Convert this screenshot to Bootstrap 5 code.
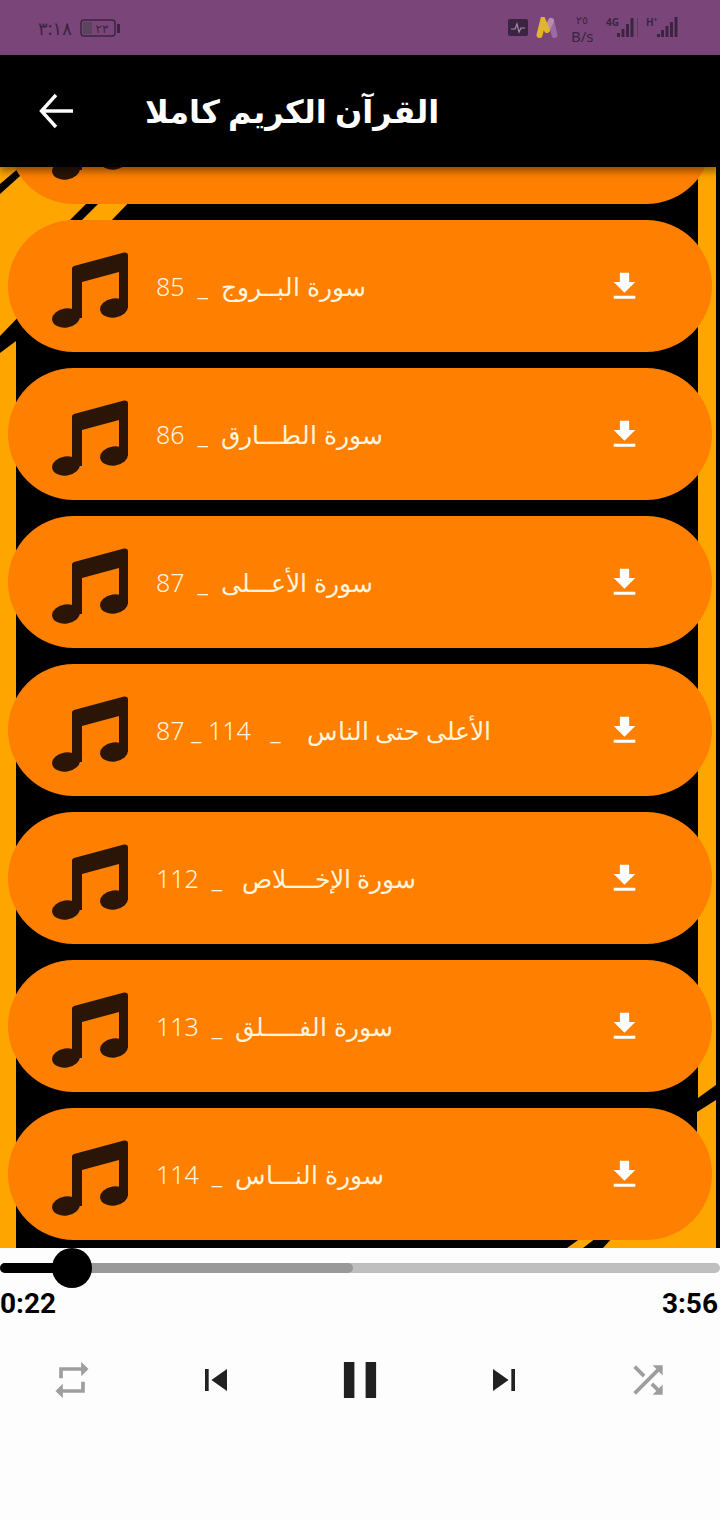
<!DOCTYPE html>
<html lang="ar">
<head>
    <meta charset="UTF-8">
    <meta name="viewport" content="width=device-width, initial-scale=1.0">
    <title>القرآن الكريم كاملا</title>
    <link href="https://cdn.jsdelivr.net/npm/bootstrap@5.3.0/dist/css/bootstrap.min.css" rel="stylesheet">
    <style>
        body {
            background-color: #fff;
            font-family: "Noto Sans", "DejaVu Sans", sans-serif;
            overflow: hidden;
        }
        .status-strip {
            height: 55px;
            flex: none;
            background-color: #7a4679;
            color: #3b2442;
            padding: 0 42px 0 38px;
        }
        .status-clock { font-size: 18px; line-height: 1; }
        .status-speed { font-size: 15px; line-height: 16px; text-align: center; width: 22px; margin: 0 13px; white-space: nowrap; }
        .status-speed small { font-size: 11px; display: block; }
        .top-bar {
            height: 112px;
            flex: none;
            background-color: #000;
            padding: 0 0 0 38px;
            box-shadow: 0 4px 8px rgba(0, 0, 0, .45);
            z-index: 2;
        }
        .top-title {
            margin: 0 0 0 71px;
            color: #fff;
            font-size: 32px;
            font-weight: 700;
        }
        .sura-area {
            flex: 1 1 0;
            min-height: 0;
            background-color: #000;
            padding: 0 8px 8px;
        }
        .sura-bg { position: absolute; top: 0; left: 0; width: 720px; height: 1081px; filter: blur(.7px); }
        .sura-row {
            flex: none;
            height: 132px;
            background-color: #ff8000;
            border-radius: 66px;
            color: #fff5df;
            padding: 0 69px 0 44px;
            position: relative;
        }
        .sura-note { width: 76px; height: 76px; flex: none; margin-top: 8px; }
        .sura-name {
            margin-left: 28px;
            font-size: 25px;
            font-weight: 300;
            white-space: pre;
            line-height: 1;
        }
        .player-box { height: 272px; flex: none; background-color: #fdfdfd; }
        .seek-wrap { height: 40px; }
        .seek-track { top: 15px; left: 0; right: 0; height: 10px; background-color: #bfbfbf; border-radius: 5px; }
        .seek-buffer { top: 15px; left: 0; height: 10px; background-color: #999; border-radius: 5px; }
        .seek-done { top: 15px; left: 0; height: 10px; background-color: #000; border-radius: 5px; }
        .seek-thumb { top: 0; left: 52px; width: 40px; height: 40px; background-color: #000; border-radius: 50%; }
        .time-line {
            font-family: Roboto, "Liberation Sans", sans-serif;
            font-weight: 700;
            font-size: 28px;
            line-height: 32px;
            color: #000;
            padding: 0 2px 0 0;
        }
        .ctrl-cell { width: 144px; }
        .ctrl-line { height: 64px; margin-top: 28px; }
    </style>
</head>
<body>
<div class="vh-100 d-flex flex-column">

    <div class="status-strip d-flex align-items-center justify-content-between">
        <div class="d-flex align-items-center gap-2">
            <span class="status-clock" dir="rtl">٣:١٨</span>
            <svg width="42" height="18" viewBox="0 0 42 18">
                <rect x="1" y="1" width="34" height="16" rx="3" fill="none" stroke="#3b2442" stroke-width="1.5"/>
                <rect x="3" y="3" width="9" height="12" fill="#5a4460"/>
                <rect x="37" y="5" width="3" height="9" fill="#3b2442"/>
                <text x="22" y="14" font-size="12" text-anchor="middle" fill="#3b2442">٢٣</text>
            </svg>
        </div>
        <div class="d-flex align-items-center">
            <svg width="20" height="17" viewBox="0 0 20 17" class="me-2">
                <rect width="20" height="17" rx="2" fill="#3b2442"/>
                <path d="M3 10h4l2-5 2 8 2-4h4" fill="none" stroke="#a98bab" stroke-width="1.2"/>
            </svg>
            <svg width="22" height="21" viewBox="0 0 22 21" fill="none" stroke-width="6" stroke-linecap="round">
                <path d="M15 4 18.500 18" stroke="#9a6ba0"/>
                <path d="M11 12 15 4" stroke="#b98db0"/>
                <path d="M3.500 18 7 4 11 13" stroke="#e2b52e"/>
            </svg>
            <div class="status-speed"><small>٢٥</small>B/s</div>
            <svg width="32" height="27" viewBox="0 -3 32 27" class="me-2">
                <text x="0" y="9" font-size="10" font-weight="700" fill="#3b2442">4G</text>
                <rect x="11" y="16" width="3" height="4" fill="#3b2442"/>
                <rect x="15.500" y="12" width="3" height="8" fill="#3b2442"/>
                <rect x="20" y="7" width="3" height="13" fill="#3b2442"/>
                <rect x="24.500" y="1" width="3" height="19" fill="#3b2442"/>
                <rect x="31" y="1" width="1" height="19" fill="#5d3a60"/>
            </svg>
            <svg width="32" height="27" viewBox="0 -3 32 27">
                <text x="0" y="9" font-size="10" font-weight="700" fill="#3b2442">H⁺</text>
                <rect x="11" y="17" width="3" height="3" fill="#3b2442"/>
                <rect x="15" y="13" width="3" height="7" fill="#3b2442"/>
                <rect x="19.500" y="9" width="3" height="11" fill="#3b2442"/>
                <rect x="24" y="5" width="3" height="15" fill="#3b2442"/>
                <rect x="28.500" y="0" width="3" height="20" fill="#3b2442"/>
            </svg>
        </div>
    </div>

    <div class="top-bar d-flex align-items-center">
        <svg width="36" height="36" viewBox="0 0 36 36" fill="none" stroke="#fff" stroke-width="3.4">
            <path d="M3.500 18H35M18 2 3.500 18 18 34"/>
        </svg>
        <h1 class="top-title" dir="rtl">القرآن الكريم كاملا</h1>
    </div>

    <div class="sura-area position-relative overflow-hidden d-flex flex-column justify-content-end gap-3">
        <!-- y is relative to the area -->
        <svg class="sura-bg" viewBox="0 0 720 1081">
            <polygon fill="#ffa500" points="0,0 20,0 0,17"/>
            <polygon fill="#ffa500" points="30,0 163,0 0,169 0,27"/>
            <polygon fill="#000" points="86,37 98,37 82,53 70,53"/>
            <polygon fill="#ffa500" points="0,186 16,174 16,1081 0,1081"/>
            <polygon fill="#ffa500" points="698,0 716,0 716,918 698,931"/>
            <polygon fill="#ffa500" points="697,945 716,933 716,1081 603,1081 640,1040 697,1000"/>
            <polygon fill="#ffa500" points="567,1081 585,1068 600,1068 583,1081"/>
        </svg>
        <div class="sura-row d-flex align-items-center">
            <svg class="sura-note" viewBox="0 0 76 76"><use href="#note"/></svg>
        </div>
        <div class="sura-row d-flex align-items-center">
            <svg class="sura-note" viewBox="0 0 76 76">
                <defs>
                    <g id="note" fill="#2a1507">
                        <path d="M20 16.500Q20 14.500 22 14L72 .5Q76 0 76 3.500V56H67V20L30 30V66H20Z"/>
                        <ellipse cx="14" cy="66" rx="14" ry="9.500" transform="rotate(-8 14 66)"/>
                        <ellipse cx="62" cy="56" rx="14" ry="9.500" transform="rotate(-8 62 56)"/>
                    </g>
                    <path id="dl" fill="#fff" d="M19 9h-4V3H9v6H5l7 7 7-7zM5 18v2h14v-2H5z"/>
                </defs>
                <use href="#note"/>
            </svg>
            <span class="sura-name" dir="rtl">سورة البــروج  _  85</span>
            <svg class="ms-auto" width="37" height="37" viewBox="0 0 24 24"><use href="#dl"/></svg>
        </div>
        <div class="sura-row d-flex align-items-center">
            <svg class="sura-note" viewBox="0 0 76 76"><use href="#note"/></svg>
            <span class="sura-name" dir="rtl">سورة الطـــارق  _  86</span>
            <svg class="ms-auto" width="37" height="37" viewBox="0 0 24 24"><use href="#dl"/></svg>
        </div>
        <div class="sura-row d-flex align-items-center">
            <svg class="sura-note" viewBox="0 0 76 76"><use href="#note"/></svg>
            <span class="sura-name" dir="rtl">سورة الأعـــلى  _  87</span>
            <svg class="ms-auto" width="37" height="37" viewBox="0 0 24 24"><use href="#dl"/></svg>
        </div>
        <div class="sura-row d-flex align-items-center">
            <svg class="sura-note" viewBox="0 0 76 76"><use href="#note"/></svg>
            <span class="sura-name" dir="rtl">الأعلى حتى الناس    _   114 _ 87</span>
            <svg class="ms-auto" width="37" height="37" viewBox="0 0 24 24"><use href="#dl"/></svg>
        </div>
        <div class="sura-row d-flex align-items-center">
            <svg class="sura-note" viewBox="0 0 76 76"><use href="#note"/></svg>
            <span class="sura-name" dir="rtl">سورة الإخــــلاص   _  112</span>
            <svg class="ms-auto" width="37" height="37" viewBox="0 0 24 24"><use href="#dl"/></svg>
        </div>
        <div class="sura-row d-flex align-items-center">
            <svg class="sura-note" viewBox="0 0 76 76"><use href="#note"/></svg>
            <span class="sura-name" dir="rtl">سورة الفـــــلق  _  113</span>
            <svg class="ms-auto" width="37" height="37" viewBox="0 0 24 24"><use href="#dl"/></svg>
        </div>
        <div class="sura-row d-flex align-items-center">
            <svg class="sura-note" viewBox="0 0 76 76"><use href="#note"/></svg>
            <span class="sura-name" dir="rtl">سورة النـــاس  _  114</span>
            <svg class="ms-auto" width="37" height="37" viewBox="0 0 24 24"><use href="#dl"/></svg>
        </div>
    </div>

    <div class="player-box">
        <div class="seek-wrap position-relative">
            <div class="seek-track position-absolute"></div>
            <div class="seek-buffer position-absolute" style="width: 353px"></div>
            <div class="seek-done position-absolute" style="width: 72px"></div>
            <div class="seek-thumb position-absolute"></div>
        </div>
        <div class="time-line d-flex justify-content-between">
            <span>0:22</span>
            <span>3:56</span>
        </div>
        <div class="ctrl-line d-flex align-items-center">
            <div class="ctrl-cell d-flex justify-content-center">
                <svg width="44" height="44" viewBox="0 0 24 24" fill="#9e9e9e"><path d="M7 7h10v3l4-4-4-4v3H5v6h2V7zm10 10H7v-3l-4 4 4 4v-3h12v-6h-2v4z"/></svg>
            </div>
            <div class="ctrl-cell d-flex justify-content-center">
                <svg width="44" height="44" viewBox="0 0 24 24" fill="#212121"><path d="M6 6h2v12H6zm3.500 6 8.500 6V6z"/></svg>
            </div>
            <div class="ctrl-cell d-flex justify-content-center">
                <svg width="56" height="56" viewBox="0 0 24 24" fill="#212121"><path d="M5.100 4.300h4.500v15.400H5.100zm9.300 0h4.500v15.400h-4.500z"/></svg>
            </div>
            <div class="ctrl-cell d-flex justify-content-center">
                <svg width="44" height="44" viewBox="0 0 24 24" fill="#212121"><path d="M6 18l8.500-6L6 6v12zM16 6v12h2V6h-2z"/></svg>
            </div>
            <div class="ctrl-cell d-flex justify-content-center">
                <svg width="44" height="44" viewBox="0 0 24 24" fill="#9e9e9e"><path d="M10.590 9.170 5.410 4 4 5.410l5.170 5.170 1.420-1.410zM14.500 4l2.040 2.040L4 18.590 5.410 20 17.960 7.460 20 9.500V4h-5.500zm.33 9.410-1.410 1.410 3.130 3.130L14.500 20H20v-5.500l-2.040 2.040-3.130-3.130z"/></svg>
            </div>
        </div>
    </div>
</div>
<script src="https://cdn.jsdelivr.net/npm/bootstrap@5.3.0/dist/js/bootstrap.bundle.min.js"></script>
</body>
</html>
